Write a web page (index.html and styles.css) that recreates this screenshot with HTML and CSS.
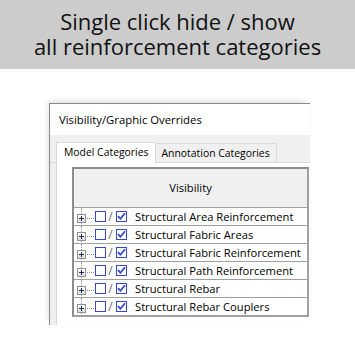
FILE: index.html
```html
<!DOCTYPE html>
<html>
<head>
<meta charset="utf-8">
<title>Visibility/Graphic Overrides</title>
<link rel="stylesheet" href="styles.css">
</head>
<body>
	<!-- CAPTION -->
	<div class="banner">
		<div class="banner-line">Single click hide / show</div>
		<div class="banner-line">all reinforcement categories</div>
	</div>

	<!-- DIALOG -->
	<div class="stage">
		<div class="window">
			<div class="titlebar">Visibility/Graphic Overrides</div>
			<div class="client">
				<div class="tabs">
					<div class="tab active">Model Categories</div>
					<div class="tab">Annotation Categories</div>
				</div>
				<div class="page">
					<div class="grid">
						<div class="grid-head">Visibility</div>

						<div class="row">
							<span class="plus"></span><span class="dots"></span><span class="box"></span><span class="slash">/</span>
							<span class="box"><svg width="9" height="9" viewBox="0 0 9 9"><path d="M1 4.2 L3.4 6.8 L8 1.2" fill="none" stroke="#2f3fd6" stroke-width="1.7"/></svg></span>
							<span class="label">Structural Area Reinforcement</span>
						</div>
						<div class="row">
							<span class="plus"></span><span class="dots"></span><span class="box"></span><span class="slash">/</span>
							<span class="box"><svg width="9" height="9" viewBox="0 0 9 9"><path d="M1 4.2 L3.4 6.8 L8 1.2" fill="none" stroke="#2f3fd6" stroke-width="1.7"/></svg></span>
							<span class="label">Structural Fabric Areas</span>
						</div>
						<div class="row">
							<span class="plus"></span><span class="dots"></span><span class="box"></span><span class="slash">/</span>
							<span class="box"><svg width="9" height="9" viewBox="0 0 9 9"><path d="M1 4.2 L3.4 6.8 L8 1.2" fill="none" stroke="#2f3fd6" stroke-width="1.7"/></svg></span>
							<span class="label">Structural Fabric Reinforcement</span>
						</div>
						<div class="row">
							<span class="plus"></span><span class="dots"></span><span class="box"></span><span class="slash">/</span>
							<span class="box"><svg width="9" height="9" viewBox="0 0 9 9"><path d="M1 4.2 L3.4 6.8 L8 1.2" fill="none" stroke="#2f3fd6" stroke-width="1.7"/></svg></span>
							<span class="label">Structural Path Reinforcement</span>
						</div>
						<div class="row">
							<span class="plus"></span><span class="dots"></span><span class="box"></span><span class="slash">/</span>
							<span class="box"><svg width="9" height="9" viewBox="0 0 9 9"><path d="M1 4.2 L3.4 6.8 L8 1.2" fill="none" stroke="#2f3fd6" stroke-width="1.7"/></svg></span>
							<span class="label">Structural Rebar</span>
						</div>
						<div class="row last">
							<span class="plus"></span><span class="dots"></span><span class="box"></span><span class="slash">/</span>
							<span class="box"><svg width="9" height="9" viewBox="0 0 9 9"><path d="M1 4.2 L3.4 6.8 L8 1.2" fill="none" stroke="#2f3fd6" stroke-width="1.7"/></svg></span>
							<span class="label">Structural Rebar Couplers</span>
						</div>
					</div>
				</div>
			</div>
		</div>
	</div>
</body>
</html>
```

FILE: styles.css
```css
html, body {
    margin: 0;
    padding: 0;
    background: #fff;
}

body {
    width: 355px;
    height: 355px;
    overflow: hidden;
    font-family: "Open Sans", "Noto Sans", sans-serif;
    color: #000;
}

.banner {
    height: 69px;
    box-sizing: border-box;
    padding-top: 9px;
    background: #cccccc;
    text-align: center;
    font-size: 22px;
    color: #111;
}

.banner-line {
    height: 25px;
    line-height: 25px;
}

.stage {
    padding: 34px 0 0 49px;
}

.window {
    width: 261px;
    height: 222px;
    box-sizing: border-box;
    border-top: 1px solid #8a8a8a;
    border-left: 1px solid #8a8a8a;
    background: #fff;
    box-shadow: -2px -3px 7px -2px rgba(0, 0, 0, 0.16);
    overflow: hidden;
}

.titlebar {
    height: 31px;
    padding-left: 9px;
    line-height: 31px;
    font-size: 11.3px;
    background: #fff;
}

.client {
    background: #f0f0f0;
    padding-top: 7px;
}

.tabs {
    display: flex;
    align-items: flex-end;
    padding-left: 6px;
    border-bottom: 1px solid #d9d9d9;
}

.tab {
    height: 18px;
    padding: 0 6px;
    line-height: 18px;
    font-size: 10.4px;
    border: 1px solid #d9d9d9;
    border-bottom: none;
    background: #f0f0f0;
}

.tab.active {
    height: 20px;
    line-height: 19px;
    margin-bottom: -1px;
    padding: 0 6px 0 7px;
    background: #fff;
    border-right: none;
}

.page {
    background: #fff;
    margin-left: 6px;
    border-left: 1px solid #d9d9d9;
    padding: 4px 0 20px 15px;
}

.grid {
    width: 237px;
    box-sizing: border-box;
    border: 2px solid #a0a0a0;
    border-top-color: #8c8c8c;
    border-left-color: #8c8c8c;
}

.grid-head {
    height: 38px;
    line-height: 37px;
    text-align: center;
    font-size: 11.2px;
    background: #f0f0f0;
    border-bottom: 1px solid #a0a0a0;
}

.row {
    position: relative;
    display: flex;
    align-items: center;
    height: 17px;
    padding-left: 3px;
    border-bottom: 1px solid #a0a0a0;
    font-size: 11.2px;
}

.row.last {
    border-bottom: none;
}

/* tree connector line */
.row::before {
    content: "";
    position: absolute;
    left: 7px;
    top: 0;
    bottom: -1px;
    border-left: 1px dotted #9a9a9a;
}

.plus {
    position: relative;
    z-index: 1;
    width: 7px;
    height: 7px;
    margin-top: 3px;
    border: 1px solid #919191;
    background: linear-gradient(#ffffff, #dcdcdc);
}

.plus::before,
.plus::after {
    content: "";
    position: absolute;
    background: #1c2a5a;
}

.plus::before {
    left: 1px;
    top: 3px;
    width: 5px;
    height: 1px;
}

.plus::after {
    left: 3px;
    top: 1px;
    width: 1px;
    height: 5px;
}

.dots {
    width: 7px;
    margin-left: 1px;
    margin-top: 3px;
    border-top: 1px dotted #8a8a8a;
}

.box {
    display: flex;
    align-items: center;
    justify-content: center;
    width: 9px;
    height: 9px;
    margin-left: 1px;
    border: 1px solid #3546cf;
    background: #fff;
}

.slash {
    width: 9px;
    text-align: center;
    color: #6a6a6a;
    font-size: 12px;
}

.label {
    margin-left: 8px;
    white-space: nowrap;
}
```
